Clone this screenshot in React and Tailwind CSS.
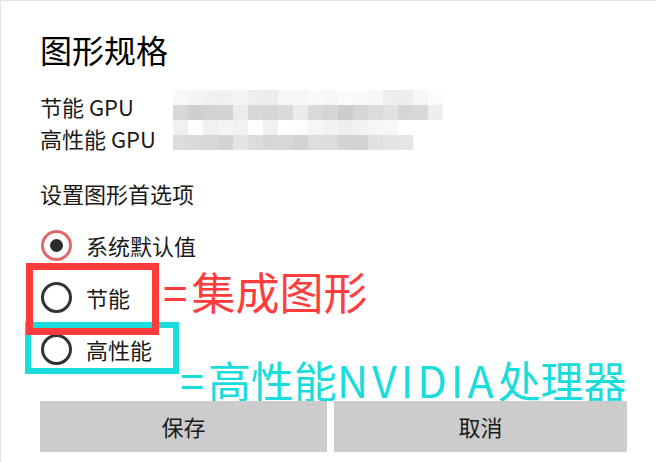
import React from "react";

const blurRows = [
  ["#f8f8f8","#f5f5f5","#f2f2f2","#f0f0f0","#f4f4f4","#efefef","#ececec","#f6f6f6","#f6f6f6","#fafafa","#f7f7f7","#fbfbfb","#f9f9f9","#f7f7f7","#efefef","#eeeeee","#f7f7f7","#fcfcfc"],
  ["#d8d8d8","#cfcfcf","#d2d2d2","#d4d4d4","#ececec","#d8d8d8","#d6d6d6","#dadada","#ebebeb","#d9d9d9","#d6d6d6","#cccccc","#d6d6d6","#dcdcdc","#e2e2e2","#d6d6d6","#d8d8d8","#eeeeee"],
  ["#f0f0f0","#fdfdfd","#f0f0f0","#f4f4f4","#f2f2f2","#fefefe","#f0f0f0","#ffffff","#fdfdfd","#f6f6f6","#f2f2f2","#eeeeee","#f2f2f2","#f6f6f6","#f8f8f8","#ffffff","#ffffff","#ffffff"],
  ["#dcdcdc","#dadada","#d8d8d8","#d4d4d4","#e4e4e4","#dcdcdc","#d6d6d6","#d8d8d8","#d2d2d2","#dedede","#dcdcdc","#d4d4d4","#d2d2d2","#e0e0e0","#e4e4e4","#e6e6e6","#ffffff","#ffffff"],
];

function Radio({ checked, label }) {
  return (
    <div className="flex h-[52px] items-center">
      {checked ? (
        <div className="ml-[1px] flex h-[31px] w-[31px] shrink-0 items-center justify-center rounded-full border-[3px] border-[#e06a6a]">
          <div className="h-[13px] w-[13px] rounded-full bg-[#2b2b2b]" />
        </div>
      ) : (
        <div className="ml-[1px] h-[31px] w-[31px] shrink-0 rounded-full border-[3px] border-[#333333]" />
      )}
      <span className="ml-[14px] text-[22px] leading-[32px] text-[#1a1a1a]">{label}</span>
    </div>
  );
}

export default function App() {
  return (
    <div
      className="relative h-[462px] w-[656px] overflow-hidden border-l border-t border-[#e4e4e4] bg-white"
      style={{ fontFamily: '"Noto Sans CJK SC", "Microsoft YaHei", sans-serif' }}
    >
      <div className="flex flex-col pl-[39px] pt-[28px]">
        <h1 className="text-[32px] leading-[40px] font-normal text-black">图形规格</h1>

        <div className="mt-[21px] flex">
          <div className="w-[133px] text-[22px] leading-[32px] text-[#1a1a1a]">
            <div>节能 GPU</div>
            <div>高性能 GPU</div>
          </div>
          <div className="flex flex-col">
            {blurRows.map((row, i) => (
              <div key={i} className="flex h-[15px]">
                {row.map((c, j) => (
                  <div key={j} className="h-[15px] w-[15px]" style={{ backgroundColor: c }} />
                ))}
              </div>
            ))}
          </div>
        </div>

        <div className="mt-[23px] text-[22px] leading-[32px] text-[#1a1a1a]">设置图形首选项</div>

        <div className="mt-[10px] flex flex-col">
          <Radio checked label="系统默认值" />
          <Radio label="节能" />
          <Radio label="高性能" />
        </div>

        <div className="relative z-10 mt-[26px] flex gap-[7px]">
          <button className="flex h-[51px] w-[287px] items-center justify-center bg-[#cccccc] text-[22px] text-[#1a1a1a]">
            保存
          </button>
          <button className="flex h-[51px] w-[293px] items-center justify-center bg-[#cccccc] text-[22px] text-[#1a1a1a]">
            取消
          </button>
        </div>
      </div>

      {/* annotation overlays */}
      <div className="absolute left-[24px] top-[321px] h-[52px] w-[154px] border-[6px] border-[#19dcdc]" />
      <div className="absolute left-[25px] top-[262px] h-[72px] w-[133px] border-[7px] border-[#ff3b3b]" />
      <div className="absolute left-[162px] top-[268px] text-[44px] leading-[44px] text-[#ff3d3d]">
        <span>=</span>
        <span className="ml-[4px]">集成图形</span>
      </div>
      <div className="absolute left-[179px] top-[356px] whitespace-nowrap text-[43px] leading-[44px] text-[#19dcdc]">
        <span>=</span>
        <span className="ml-[4px]">高性能</span>
        <span className="tracking-[4px]">NVIDIA</span>
        <span>处理器</span>
      </div>
    </div>
  );
}
